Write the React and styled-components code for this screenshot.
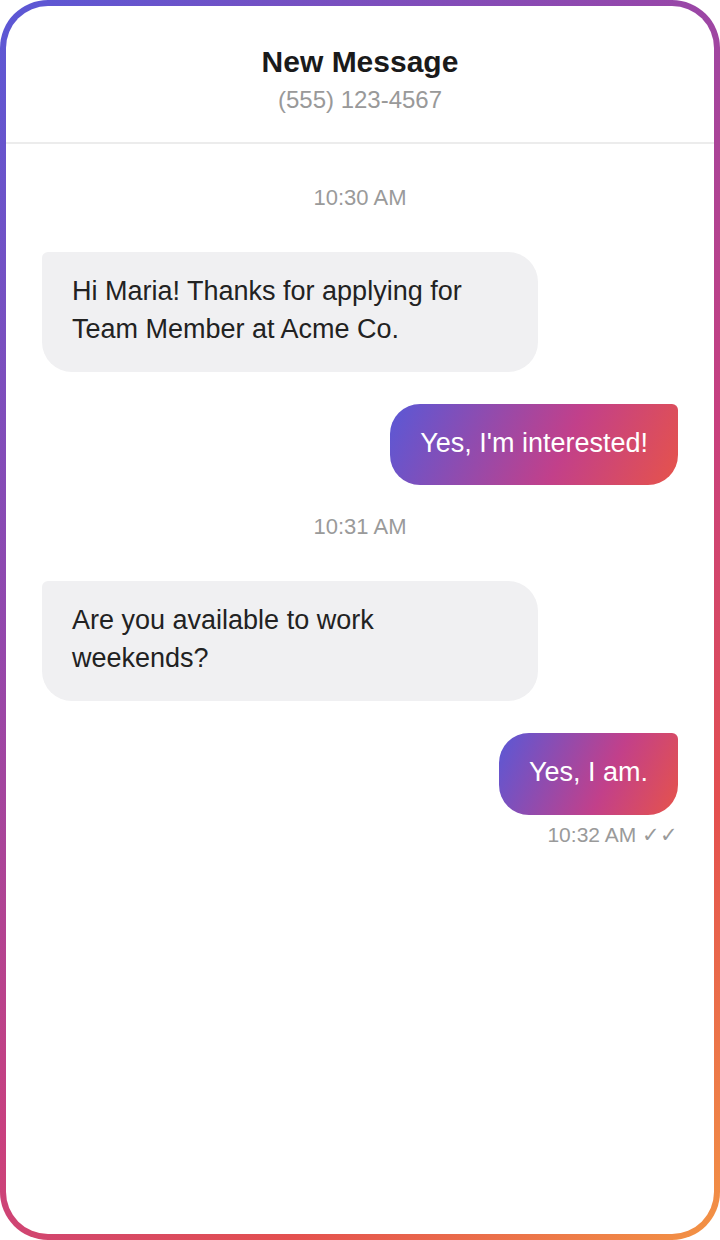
import React from "react";
import styled, { createGlobalStyle } from "styled-components";

const messages = [
  { type: "time", text: "10:30 AM" },
  { type: "in", text: "Hi Maria! Thanks for applying for Team Member at Acme Co." },
  { type: "out", text: "Yes, I'm interested!" },
  { type: "time", text: "10:31 AM" },
  { type: "in", text: "Are you available to work weekends?" },
  { type: "out", text: "Yes, I am.", receipt: "10:32 AM ✓✓" },
];

function App() {
  return (
    <>
      <GlobalStyle />
      <Frame>
        <Screen>
          <Header>
            <Title>New Message</Title>
            <Phone>(555) 123-4567</Phone>
          </Header>
          <Thread>
            {messages.map((m, i) => {
              if (m.type === "time") return <Stamp key={i}>{m.text}</Stamp>;
              return (
                <Row key={i} $out={m.type === "out"}>
                  <Bubble $out={m.type === "out"}>{m.text}</Bubble>
                  {m.receipt && <Receipt>{m.receipt}</Receipt>}
                </Row>
              );
            })}
          </Thread>
        </Screen>
      </Frame>
    </>
  );
}

export default App;

const GlobalStyle = createGlobalStyle`
  html, body {
    margin: 0;
    padding: 0;
    background: #fff;
  }
  body {
    font-family: "Liberation Sans", Arial, sans-serif;
  }
`;

const Frame = styled.div`
  width: 720px;
  height: 1240px;
  box-sizing: border-box;
  padding: 6px;
  border-radius: 48px;
  background: linear-gradient(135deg, #5a58d6 0%, #9447ab 33%, #c8407f 58%, #e4504f 78%, #f39444 100%);
`;

const Screen = styled.div`
  height: 100%;
  background: #fff;
  border-radius: 42px;
  overflow: hidden;
  display: flex;
  flex-direction: column;
`;

const Header = styled.div`
  padding: 38px 0 28px;
  text-align: center;
  border-bottom: 2px solid #ececec;
`;

const Title = styled.div`
  font-size: 30px;
  line-height: 36px;
  font-weight: 700;
  color: #1a1a1a;
`;

const Phone = styled.div`
  margin-top: 6px;
  font-size: 24px;
  line-height: 28px;
  color: #999;
`;

const Thread = styled.div`
  display: flex;
  flex-direction: column;
  padding: 42px 36px 0;
`;

const Stamp = styled.div`
  text-align: center;
  font-size: 22px;
  line-height: 24px;
  color: #9a9a9a;
  margin: 0 0 42px;
`;

const Row = styled.div`
  display: flex;
  flex-direction: column;
  align-items: ${(p) => (p.$out ? "flex-end" : "flex-start")};
  margin-bottom: 32px;
  &:has(+ ${Stamp}) {
    margin-bottom: 30px;
  }
`;

const Bubble = styled.div`
  box-sizing: border-box;
  max-width: 496px;
  padding: 21px 30px 23px;
  font-size: 27px;
  line-height: 1.4;
  color: ${(p) => (p.$out ? "#fff" : "#222")};
  background: ${(p) =>
    p.$out
      ? "linear-gradient(115deg, #5a58d6 0%, #c2408a 60%, #e6534a 100%)"
      : "#f0f0f2"};
  border-radius: ${(p) => (p.$out ? "30px 6px 30px 30px" : "6px 30px 30px 30px")};
`;

const Receipt = styled.div`
  margin-top: 8px;
  font-size: 21px;
  line-height: 24px;
  color: #9a9a9a;
`;
